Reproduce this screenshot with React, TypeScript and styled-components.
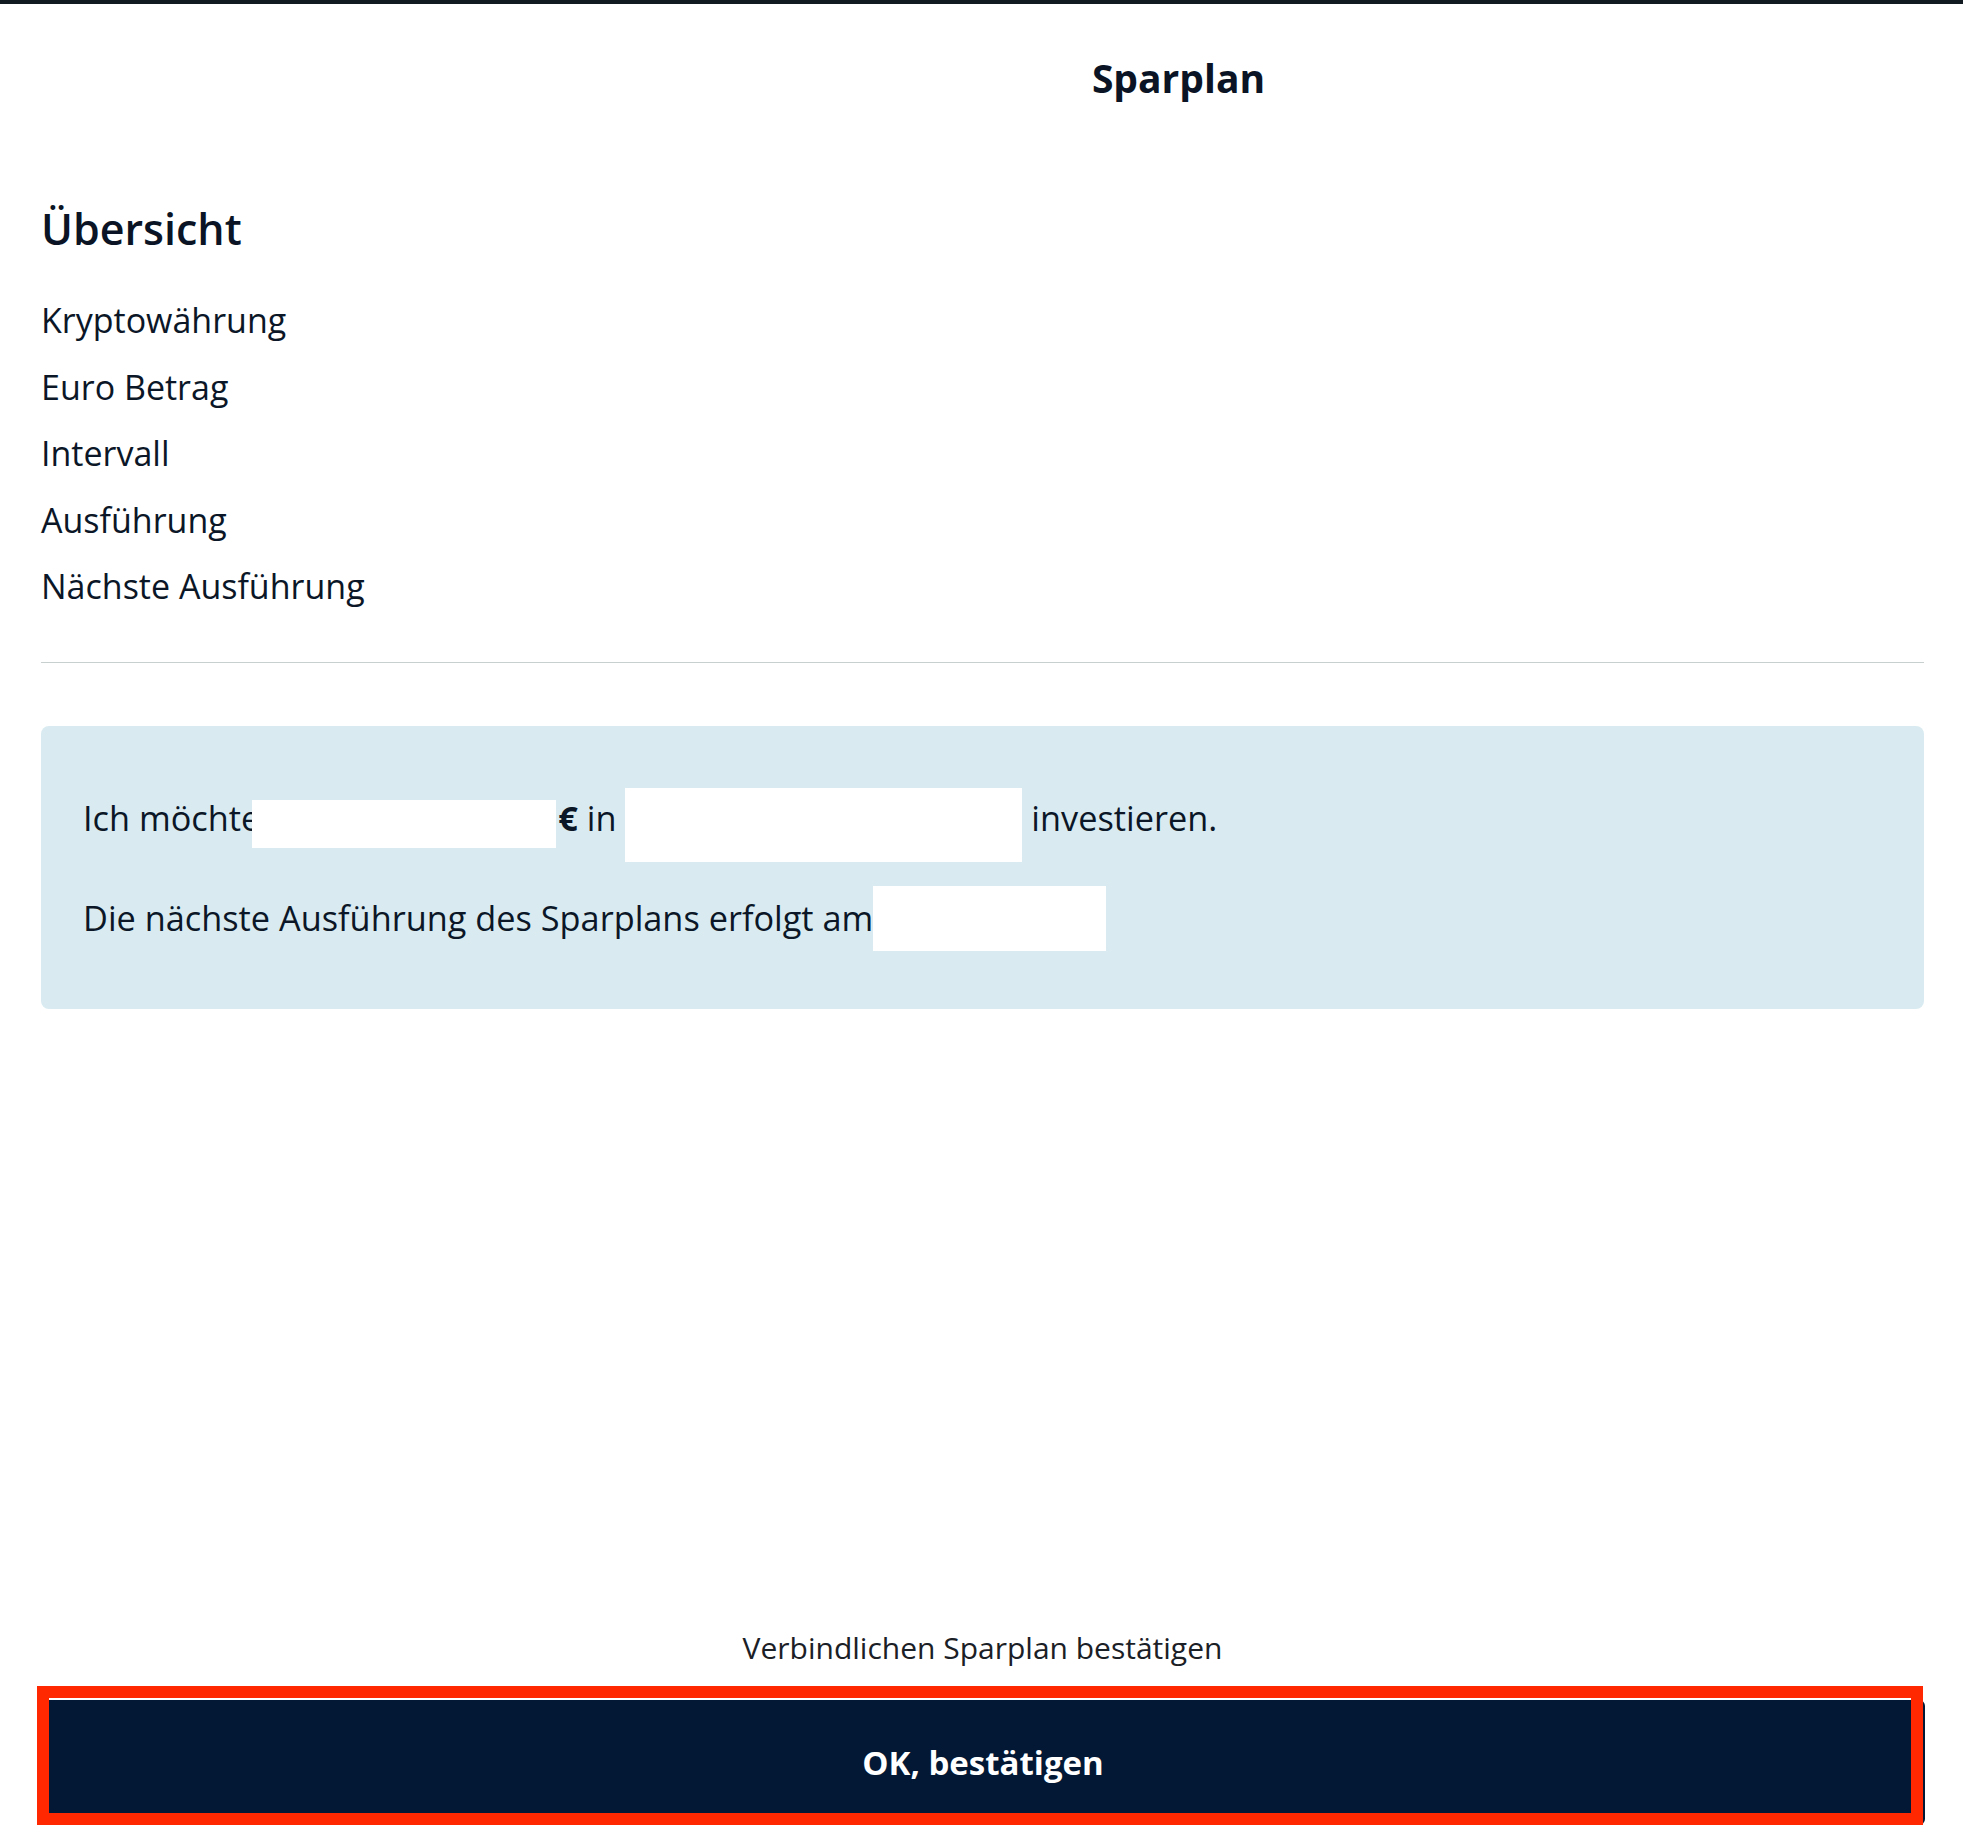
import React from 'react';
import styled, { createGlobalStyle } from 'styled-components';

const GlobalStyle = createGlobalStyle`
  html, body {
    margin: 0;
    padding: 0;
    background: #ffffff;
  }
  body {
    font-family: "Open Sans", "Noto Sans", sans-serif;
    color: #0b1627;
  }
`;

const Page = styled.div`
  height: 1825px;
  overflow: hidden;
  display: flex;
  flex-direction: column;
  background: #ffffff;
`;

const TopBar = styled.div`
  height: 4px;
  background: #111a20;
  flex-shrink: 0;
`;

const Content = styled.div`
  flex: 1;
  display: flex;
  flex-direction: column;
  padding: 0 39px 0 41px;
`;

const Header = styled.header`
  display: flex;
  justify-content: center;
  padding: 50px 0 0 392px;
`;

const Title = styled.h1`
  margin: 0;
  font-size: 39px;
  line-height: 48px;
  font-weight: 700;
  color: #0a1424;
`;

const SectionTitle = styled.h2`
  margin: 102px 0 0;
  font-size: 43px;
  line-height: 50px;
  font-weight: 600;
  color: #0a1424;
`;

const List = styled.ul`
  list-style: none;
  margin: 33px 0 0;
  padding: 0;
`;

const Row = styled.li`
  font-size: 34px;
  line-height: 66.5px;
  color: #0b1627;
`;

const Divider = styled.hr`
  margin: 42.5px 0 0;
  border: 0;
  height: 1px;
  background: #c7cfcf;
`;

const InfoBox = styled.div`
  margin-top: 62.5px;
  background: #d9ebf1;
  border-radius: 8px;
  padding: 62px 41px 58px 42px;
`;

const Sentence = styled.p<{ gap?: number }>`
  margin: ${(p) => p.gap ?? 0}px 0 0;
  font-size: 34.3px;
  line-height: 45px;
  color: #0b1627;
  white-space: nowrap;
`;

const Field = styled.span<{ w: number; h: number; drop: number; shift?: number }>`
  display: inline-block;
  width: ${(p) => p.w}px;
  height: ${(p) => p.h}px;
  background: #ffffff;
  vertical-align: -${(p) => p.drop}px;
  margin-left: ${(p) => p.shift ?? 0}px;
`;

const Currency = styled.b`
  font-weight: 700;
  margin-left: 2px;
`;

const Spacer = styled.div`
  flex: 1;
`;

const Footer = styled.footer`
  display: flex;
  flex-direction: column;
  align-items: center;
`;

const Note = styled.p`
  margin: 0;
  font-size: 30px;
  line-height: 40px;
  color: #1b2026;
`;

const ButtonWrap = styled.div`
  position: relative;
  align-self: stretch;
  margin-top: 32px;
  margin-right: -1px;
`;

const ConfirmButton = styled.button`
  display: block;
  width: 100%;
  height: 125px;
  border: 0;
  border-radius: 6px;
  background: #021834;
  color: #ffffff;
  font-family: "Open Sans", "Noto Sans", sans-serif;
  font-size: 33px;
  font-weight: 700;
  cursor: pointer;
`;

/* red highlight frame drawn over the confirm button */
const Highlight = styled.div`
  position: absolute;
  left: -4px;
  top: -14px;
  width: 1886px;
  height: 139px;
  box-sizing: border-box;
  border: 12px solid #ff2800;
  pointer-events: none;
  &::before {
    content: '';
    position: absolute;
    left: 0;
    right: 0;
    top: 0;
    height: 2px;
    background: #ffffff;
  }
`;

const rows = ['Kryptowährung', 'Euro Betrag', 'Intervall', 'Ausführung', 'Nächste Ausführung'];

export default function App() {
  return (
    <>
      <GlobalStyle />
      <Page>
        <TopBar />
        <Content>
          <Header>
            <Title>Sparplan</Title>
          </Header>
          <SectionTitle>Übersicht</SectionTitle>
          <List>
            {rows.map((r) => (
              <Row key={r}>{r}</Row>
            ))}
          </List>
          <Divider />
          <InfoBox>
            <Sentence>
              Ich möchte<Field w={304} h={48} drop={17} shift={-8} />
              <Currency>€</Currency> in <Field w={397} h={74} drop={31} /> investieren.
            </Sentence>
            <Sentence gap={24}>
              Die nächste Ausführung des Sparplans erfolgt am<Field w={233} h={65} drop={20} />
            </Sentence>
          </InfoBox>
          <Spacer />
          <Footer>
            <Note>Verbindlichen Sparplan bestätigen</Note>
            <ButtonWrap>
              <ConfirmButton>OK, bestätigen</ConfirmButton>
              <Highlight />
            </ButtonWrap>
          </Footer>
        </Content>
      </Page>
    </>
  );
}
